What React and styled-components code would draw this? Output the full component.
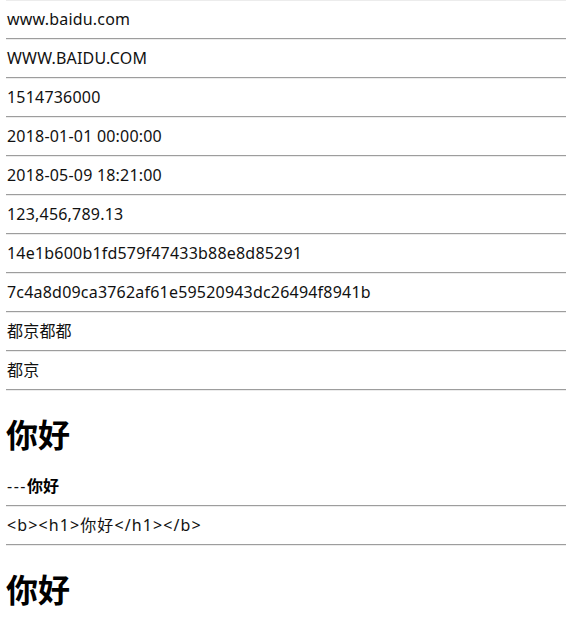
import React from 'react';
import styled, { createGlobalStyle } from 'styled-components';

const GlobalStyle = createGlobalStyle`
	html, body {
		margin: 0;
		padding: 0;
		background: #fff;
		overflow: hidden;
	}
	body {
		padding-left: 6px;
		font-family: 'Noto Sans', 'Noto Sans CJK SC', sans-serif;
		color: #111;
	}
`;

const Page = styled.div`
	margin-top: -9px;
`;

const Rule = styled.hr`
	margin: 8px 0;
	height: 0;
	border: none;
	border-top: 1px solid #9d9d9d;
	border-bottom: 1px solid #ececec;
`;

const Row = styled.div`
	font-size: 16px;
	line-height: 21px;
	padding-left: 1px;
	white-space: nowrap;
	letter-spacing: ${({ spacing }) => spacing || '0.2px'};
`;

const Title = styled.h1`
	margin: 21px 0;
	font-size: 32px;
	line-height: 42px;
	font-weight: 700;
	font-family: 'Noto Sans CJK SC', sans-serif;
	color: #000;
`;

const Strong = styled.b`
	font-family: 'Noto Sans CJK SC', sans-serif;
	letter-spacing: 0;
	color: #000;
`;

const items = [
	'www.baidu.com',
	'WWW.BAIDU.COM',
	'1514736000',
	'2018-01-01 00:00:00',
	'2018-05-09 18:21:00',
	'123,456,789.13',
	'14e1b600b1fd579f47433b88e8d85291',
	'7c4a8d09ca3762af61e59520943dc26494f8941b',
	'都京都都',
	'都京',
];

const App = () => {
	return (
		<Page>
			<GlobalStyle />
			<Rule />
			{items.map((text) => (
				<React.Fragment key={text}>
					<Row>{text}</Row>
					<Rule />
				</React.Fragment>
			))}
			<Title>你好</Title>
			<Row spacing="1.5px">
				---<Strong>你好</Strong>
			</Row>
			<Rule />
			<Row spacing="1.1px">{'<b><h1>你好</h1></b>'}</Row>
			<Rule />
			<Title>你好</Title>
		</Page>
	);
};

export default App;
